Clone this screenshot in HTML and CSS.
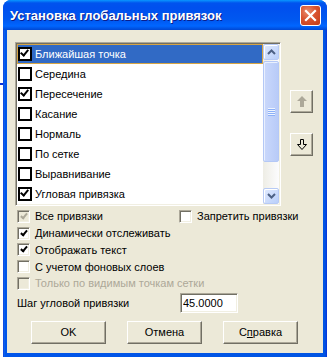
FILE: index.html
```html
<!DOCTYPE html>
<html lang="ru">
<head>
    <meta charset="UTF-8">
    <title>Установка глобальных привязок</title>
    <link rel="stylesheet" href="styles.css">
</head>
<body>
    <span class="edge-tick"></span>
    <div class="window">
        <div class="titlebar">
            <span class="title">Установка глобальных привязок</span>
            <span class="close-btn">
                <svg width="13" height="13" viewBox="0 0 13 13">
                    <path d="M2 2 L11 11 M11 2 L2 11" stroke="#fff" stroke-width="2.2" stroke-linecap="square"/>
                </svg>
            </span>
        </div>

        <div class="client">
            <div class="top-row">
                <div class="listbox">
                    <div class="list-items">
                        <div class="item selected"><span class="lbox checked"></span>Ближайшая точка</div>
                        <div class="item"><span class="lbox"></span>Середина</div>
                        <div class="item"><span class="lbox checked"></span>Пересечение</div>
                        <div class="item"><span class="lbox"></span>Касание</div>
                        <div class="item"><span class="lbox"></span>Нормаль</div>
                        <div class="item"><span class="lbox"></span>По сетке</div>
                        <div class="item"><span class="lbox"></span>Выравнивание</div>
                        <div class="item"><span class="lbox checked"></span>Угловая привязка</div>
                    </div>
                    <div class="scrollbar">
                        <div class="sb-btn">
                            <svg width="9" height="6" viewBox="0 0 9 6"><path d="M1 5 L4.5 1.5 L8 5" fill="none" stroke="#4d6185" stroke-width="2"/></svg>
                        </div>
                        <div class="sb-thumb"><span class="grip"></span></div>
                        <div class="sb-track"></div>
                        <div class="sb-btn">
                            <svg width="9" height="6" viewBox="0 0 9 6"><path d="M1 1 L4.5 4.5 L8 1" fill="none" stroke="#4d6185" stroke-width="2"/></svg>
                        </div>
                    </div>
                </div>

                <div class="side-buttons">
                    <button class="icon-btn" disabled>
                        <svg width="12" height="13" viewBox="0 0 12 13">
                            <path d="M6 1 L11 6 L8 6 L8 12 L4 12 L4 6 L1 6 Z" fill="#aca899"/>
                        </svg>
                    </button>
                    <button class="icon-btn">
                        <svg width="12" height="13" viewBox="0 0 12 13">
                            <path d="M4.5 1.5 L7.5 1.5 L7.5 6.5 L10.5 6.5 L6 11.5 L1.5 6.5 L4.5 6.5 Z" fill="#ece9d8" stroke="#000" stroke-width="1"/>
                        </svg>
                    </button>
                </div>
            </div>

            <div class="options">
                <label class="opt locked"><span class="cbox checked"></span>Все привязки</label>
                <label class="opt"><span class="cbox"></span>Запретить привязки</label>
                <label class="opt wide"><span class="cbox checked"></span>Динамически отслеживать</label>
                <label class="opt wide"><span class="cbox checked"></span>Отображать текст</label>
                <label class="opt wide"><span class="cbox"></span>С учетом фоновых слоев</label>
                <label class="opt wide disabled"><span class="cbox"></span>Только по видимым точкам сетки</label>
            </div>

            <div class="step-row">
                <span class="step-label">Шаг угловой привязки</span>
                <input class="step-input" type="text" value="45.0000">
            </div>

            <div class="actions">
                <button class="btn">OK</button>
                <button class="btn">Отмена</button>
                <button class="btn">С<u>п</u>равка</button>
            </div>
        </div>
    </div>
</body>
</html>
```

FILE: styles.css
```css
:root {
    --face: #ece9d8;
    --shadow: #aca899;
    --dark: #716f64;
    --light: #f1efe2;
}

body {
    margin: 0;
    background: #fff;
    font-family: 'Liberation Sans', Tahoma, sans-serif;
    font-size: 11px;
    color: #000;
    position: relative;
}

.edge-tick {
    position: absolute;
    left: 0;
    top: 83px;
    width: 3px;
    height: 2px;
    background: #0831d9;
}

.window {
    margin-left: 3px;
    width: 324px;
    height: 357px;
    display: flex;
    flex-direction: column;
    border-radius: 8px 8px 0 0;
    background: linear-gradient(90deg, #0831d9 0, #166aee 1px, #0055ea 2px, #0054e3 calc(100% - 2px), #0831d9 100%);
    overflow: hidden;
}

.titlebar {
    height: 30px;
    flex-shrink: 0;
    display: flex;
    align-items: center;
    justify-content: space-between;
    padding: 0 6px 0 7px;
    background: linear-gradient(#0997ff 0, #0053ee 3px, #0050ee 8px, #0058f0 20px, #0066ff 26px, #0047d3 30px);
}

.title {
    color: #fff;
    font-weight: bold;
    font-size: 13px;
    text-shadow: 1px 1px #0a1e8c;
    padding-top: 1px;
}

.close-btn {
    width: 21px;
    height: 21px;
    box-sizing: border-box;
    border: 1px solid #fff;
    border-radius: 3px;
    background: radial-gradient(circle at 35% 30%, #e98d6f 0, #d9532f 45%, #c43c16 100%);
    display: flex;
    align-items: center;
    justify-content: center;
}

.client {
    flex: 1;
    margin: 0 4px 4px;
    background: var(--face);
    padding: 12px 0 0 8px;
}

.top-row {
    display: flex;
    gap: 9px;
}

.listbox {
    width: 266px;
    height: 164px;
    box-sizing: border-box;
    display: flex;
    background: #fff;
    border: 1px solid;
    border-color: var(--shadow) #fff #fff var(--shadow);
    box-shadow: inset 1px 1px var(--dark), inset -1px -1px var(--light);
    padding: 1px;
}

.list-items {
    flex: 1;
    overflow: hidden;
}

.item {
    height: 20px;
    box-sizing: border-box;
    display: flex;
    align-items: center;
    padding-left: 1px;
    white-space: nowrap;
}

.item.selected {
    background: #316ac5;
    color: #fff;
    border: 1px solid #d6a545;
    padding-left: 0;
}

.lbox {
    width: 14px;
    height: 14px;
    box-sizing: border-box;
    border: 2px solid #000;
    background: #fff;
    margin-right: 3px;
    flex-shrink: 0;
    position: relative;
}

.lbox.checked::after,
.cbox.checked::after {
    content: "";
    position: absolute;
    left: 2px;
    top: 0px;
    width: 3px;
    height: 6px;
    border: solid #000;
    border-width: 0 2px 2px 0;
    transform: rotate(40deg);
}

.lbox.checked::after {
    left: 2px;
    top: -1px;
}

.scrollbar {
    width: 16px;
    display: flex;
    flex-direction: column;
    background: linear-gradient(90deg, #eeede5, #fcfcfe);
}

.sb-btn {
    height: 16px;
    box-sizing: border-box;
    border: 1px solid #b7caf5;
    border-radius: 2px;
    background: linear-gradient(135deg, #e1eafe, #b9cffa);
    box-shadow: inset 1px 1px #fff;
    display: flex;
    align-items: center;
    justify-content: center;
    flex-shrink: 0;
}

.sb-thumb {
    height: 101px;
    margin-top: 1px;
    box-sizing: border-box;
    border: 1px solid #b4c8f6;
    border-radius: 2px;
    background: linear-gradient(90deg, #cad8fb, #b8cbf8);
    box-shadow: inset 1px 1px #e9f0fe;
    display: flex;
    align-items: center;
    justify-content: center;
}

.grip {
    width: 7px;
    height: 8px;
    background: repeating-linear-gradient(#eef4fe 0, #eef4fe 1px, #8cb0f8 1px, #8cb0f8 2px);
}

.sb-track {
    flex: 1;
}

.side-buttons {
    display: flex;
    flex-direction: column;
    gap: 20px;
    padding-top: 48px;
}

.icon-btn,
.btn {
    background: var(--face);
    border: 1px solid;
    border-color: #fff var(--dark) var(--dark) #fff;
    box-shadow: inset -1px -1px var(--shadow);
    border-radius: 0;
    padding: 0;
    font: inherit;
    color: #000;
}

.icon-btn {
    width: 23px;
    height: 23px;
    display: flex;
    align-items: center;
    justify-content: center;
}

.options {
    display: grid;
    grid-template-columns: 162px auto;
    grid-auto-rows: 16.75px;
    margin-top: 2px;
    padding-left: 2px;
}

.opt {
    display: flex;
    align-items: center;
    white-space: nowrap;
}

.opt.wide {
    grid-column: 1 / 3;
}

.cbox {
    width: 13px;
    height: 13px;
    box-sizing: border-box;
    border: 1px solid;
    border-color: var(--shadow) #fff #fff var(--shadow);
    box-shadow: inset 1px 1px var(--dark), inset -1px -1px var(--light);
    background: #fff;
    margin-right: 5px;
    position: relative;
    flex-shrink: 0;
}

.cbox.checked::after {
    left: 4px;
    top: 1px;
    width: 2px;
    height: 5px;
}

.opt.disabled {
    color: var(--shadow);
}

.opt.disabled .cbox,
.opt.locked .cbox {
    background: var(--face);
}

.opt.locked .cbox::after {
    border-color: var(--shadow);
}

.step-row {
    display: flex;
    align-items: center;
    height: 20px;
    margin-top: 1px;
    padding-left: 2px;
}

.step-label {
    width: 163px;
}

.step-input {
    width: 58px;
    height: 20px;
    box-sizing: border-box;
    border: 1px solid;
    border-color: var(--shadow) #fff #fff var(--shadow);
    box-shadow: inset 1px 1px var(--dark), inset -1px -1px var(--light);
    font: inherit;
    padding: 0 2px;
    outline: none;
}

.actions {
    display: flex;
    gap: 21px;
    margin-top: 8px;
    padding-left: 16px;
}

.btn {
    width: 75px;
    height: 23px;
}
```
